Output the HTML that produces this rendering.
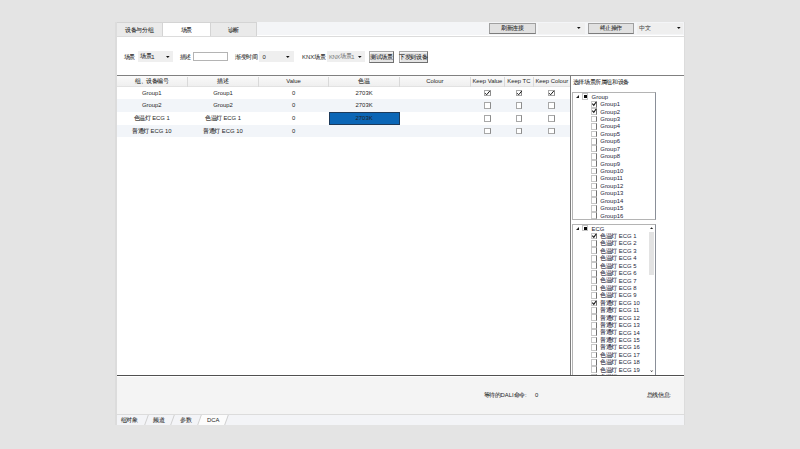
<!DOCTYPE html><html><head><meta charset="utf-8"><style>
*{margin:0;padding:0;box-sizing:border-box}
html,body{width:800px;height:449px;overflow:hidden;background:#e4e4e4;font-family:"Liberation Sans",sans-serif;color:#1f1f1f}
.a{position:absolute}
.t{position:absolute;font-size:5.9px;line-height:1;white-space:nowrap}
.c{transform:translateX(-50%)}
.z{position:relative;top:-0.2px;font-size:5.6px;letter-spacing:-0.4px;-webkit-text-stroke:0.06px currentColor}
.cb{position:absolute;width:6.8px;height:6.4px;border:0.7px solid #9a9a9a;background:#fff}
svg{position:absolute;overflow:visible}
</style></head><body>
<div class="a" style="left:116.00px;top:21.70px;width:568.50px;height:403.60px;background:#fff"></div>
<div class="a" style="left:116.00px;top:21.70px;width:568.50px;height:13.50px;background:#f4f5f7"></div>
<div class="a" style="left:116.00px;top:35.80px;width:568.50px;height:1.40px;background:#dcdcdc"></div>
<div class="a" style="left:116.00px;top:22.00px;width:46.40px;height:14.20px;background:#eaeaea;border-top:1px solid #d4d4d4"></div>
<div class="t c" style="left:139.20px;top:27.75px"><span class="z">设备与分组</span></div>
<div class="a" style="left:162.40px;top:22.00px;width:48.00px;height:14.20px;background:#fff;border-top:1px solid #d4d4d4"></div>
<div class="t c" style="left:186.40px;top:27.75px"><span class="z">场景</span></div>
<div class="a" style="left:210.40px;top:22.00px;width:46.10px;height:14.20px;background:#eaeaea;border-top:1px solid #d4d4d4"></div>
<div class="t c" style="left:233.45px;top:27.75px"><span class="z">诊断</span></div>
<div class="a" style="left:116.10px;top:22.00px;width:1.00px;height:14.00px;background:#d4d4d4"></div>
<div class="a" style="left:161.90px;top:22.00px;width:1.00px;height:14.00px;background:#d4d4d4"></div>
<div class="a" style="left:209.90px;top:22.00px;width:1.00px;height:14.00px;background:#d4d4d4"></div>
<div class="a" style="left:255.90px;top:22.00px;width:1.00px;height:14.00px;background:#d4d4d4"></div>
<div class="a" style="left:489.20px;top:23.30px;width:46.40px;height:10.30px;background:#e1e1e1;border:0.8px solid #a0a0a0;border-bottom-color:#7c7c7c"></div>
<div class="t c" style="left:512.40px;top:26.45px"><span class="z">刷新连接</span></div>
<div class="a" style="left:538.00px;top:23.00px;width:47.00px;height:11.20px;background:#efefef"></div>
<svg style="left:576.50px;top:27.25px" width="3.6" height="2.1"><path d="M0 0 L3.6 0 L1.8 2.1 Z" fill="#111"/></svg>
<div class="a" style="left:588.20px;top:23.30px;width:45.40px;height:10.40px;background:#e1e1e1;border:0.8px solid #a0a0a0;border-bottom-color:#7c7c7c"></div>
<div class="t c" style="left:610.90px;top:26.35px"><span class="z">终止操作</span></div>
<div class="a" style="left:637.10px;top:22.80px;width:46.30px;height:11.40px;background:#efefef"></div>
<div class="t" style="left:639.10px;top:26.55px;color:#505050"><span class="z">中文</span></div>
<svg style="left:676.50px;top:27.25px" width="3.6" height="2.1"><path d="M0 0 L3.6 0 L1.8 2.1 Z" fill="#111"/></svg>
<div class="t" style="left:123.60px;top:54.75px"><span class="z">场景</span></div>
<div class="a" style="left:137.75px;top:51.00px;width:35.35px;height:11.00px;background:#efefef"></div>
<div class="t" style="left:140.00px;top:54.55px"><span class="z">场景</span>1</div>
<svg style="left:165.90px;top:55.75px" width="3.6" height="2.1"><path d="M0 0 L3.6 0 L1.8 2.1 Z" fill="#111"/></svg>
<div class="t" style="left:179.60px;top:54.75px"><span class="z">描述</span></div>
<div class="a" style="left:193.10px;top:51.60px;width:34.80px;height:9.40px;background:#fff;border:0.7px solid #b4b4b4"></div>
<div class="t" style="left:235.00px;top:54.75px"><span class="z">渐变时间</span></div>
<div class="a" style="left:258.60px;top:51.00px;width:35.20px;height:11.00px;background:#efefef"></div>
<div class="t" style="left:262.50px;top:54.55px">0</div>
<svg style="left:286.40px;top:55.75px" width="3.6" height="2.1"><path d="M0 0 L3.6 0 L1.8 2.1 Z" fill="#111"/></svg>
<div class="t" style="left:302.10px;top:54.75px">KNX<span class="z">场景</span></div>
<div class="a" style="left:327.15px;top:50.60px;width:37.65px;height:11.80px;background:#efefef"></div>
<div class="t" style="left:328.90px;top:54.55px;color:#7a7a7a"><span style="letter-spacing:-0.35px">KNX</span><span class="z">场景</span>1</div>
<svg style="left:358.20px;top:55.75px" width="3.6" height="2.1"><path d="M0 0 L3.6 0 L1.8 2.1 Z" fill="#111"/></svg>
<div class="a" style="left:369.15px;top:50.90px;width:24.50px;height:11.70px;background:#e4e4e4;border:0.8px solid #a8a8a8;border-right-color:#707070;border-bottom-color:#707070;box-shadow:inset 0.7px 0.7px 0 #fafafa"></div>
<div class="t c" style="left:381.40px;top:54.80px"><span class="z">测试场景</span></div>
<div class="a" style="left:398.90px;top:50.90px;width:28.70px;height:11.70px;background:#e4e4e4;border:0.8px solid #a8a8a8;border-right-color:#707070;border-bottom-color:#707070;box-shadow:inset 0.7px 0.7px 0 #fafafa"></div>
<div class="t c" style="left:413.25px;top:54.80px"><span class="z">下发到设备</span></div>
<div class="a" style="left:117.00px;top:74.80px;width:566.80px;height:1.40px;background:#808080"></div>
<div class="a" style="left:117.00px;top:76.10px;width:453.00px;height:10.70px;background:linear-gradient(#fbfbfb,#f6f6f6 35%,#efefef);border-bottom:0.6px solid #e2e2e2"></div>
<div class="a" style="left:187.10px;top:76.50px;width:0.80px;height:10.10px;background:#d9d9d9"></div>
<div class="a" style="left:258.10px;top:76.50px;width:0.80px;height:10.10px;background:#d9d9d9"></div>
<div class="a" style="left:328.20px;top:76.50px;width:0.80px;height:10.10px;background:#d9d9d9"></div>
<div class="a" style="left:399.20px;top:76.50px;width:0.80px;height:10.10px;background:#d9d9d9"></div>
<div class="a" style="left:469.80px;top:76.50px;width:0.80px;height:10.10px;background:#d9d9d9"></div>
<div class="a" style="left:504.20px;top:76.50px;width:0.80px;height:10.10px;background:#d9d9d9"></div>
<div class="a" style="left:532.80px;top:76.50px;width:0.80px;height:10.10px;background:#d9d9d9"></div>
<div class="t c" style="left:151.75px;top:79.25px"><span class="z">组、设备编号</span></div>
<div class="t c" style="left:223.00px;top:79.25px"><span class="z">描述</span></div>
<div class="t c" style="left:293.55px;top:79.25px">Value</div>
<div class="t c" style="left:364.10px;top:79.25px"><span class="z">色温</span></div>
<div class="t c" style="left:434.90px;top:79.25px">Colour</div>
<div class="t c" style="left:487.40px;top:79.25px">Keep Value</div>
<div class="t c" style="left:518.90px;top:79.25px">Keep TC</div>
<div class="t c" style="left:551.75px;top:79.25px">Keep Colour</div>
<div class="t c" style="left:151.75px;top:90.85px">Group1</div>
<div class="t c" style="left:223.00px;top:90.85px">Group1</div>
<div class="t c" style="left:293.55px;top:90.85px">0</div>
<div class="t c" style="left:364.10px;top:90.85px">2703K</div>
<div class="a" style="left:484.00px;top:89.60px;width:6.80px;height:6.60px;background:#fff;border:0.7px solid #a8a8a8;border-right:0.8px solid #8c8c8c"></div>
<svg style="left:484.00px;top:89.60px" width="6.8" height="6.6" viewBox="0 0 6.8 6.6"><path d="M1.2 3.2 L2.6 4.8 L5.8 1.0" fill="none" stroke="#1a1a1a" stroke-width="1.0"/></svg>
<div class="a" style="left:515.50px;top:89.60px;width:6.80px;height:6.60px;background:#fff;border:0.7px solid #a8a8a8;border-right:0.8px solid #8c8c8c"></div>
<svg style="left:515.50px;top:89.60px" width="6.8" height="6.6" viewBox="0 0 6.8 6.6"><path d="M1.2 3.2 L2.6 4.8 L5.8 1.0" fill="none" stroke="#1a1a1a" stroke-width="1.0"/></svg>
<div class="a" style="left:548.35px;top:89.60px;width:6.80px;height:6.60px;background:#fff;border:0.7px solid #a8a8a8;border-right:0.8px solid #8c8c8c"></div>
<svg style="left:548.35px;top:89.60px" width="6.8" height="6.6" viewBox="0 0 6.8 6.6"><path d="M1.2 3.2 L2.6 4.8 L5.8 1.0" fill="none" stroke="#1a1a1a" stroke-width="1.0"/></svg>
<div class="a" style="left:117.00px;top:99.00px;width:453.00px;height:13.00px;background:#f2f5f9"></div>
<div class="t c" style="left:151.75px;top:103.45px">Group2</div>
<div class="t c" style="left:223.00px;top:103.45px">Group2</div>
<div class="t c" style="left:293.55px;top:103.45px">0</div>
<div class="t c" style="left:364.10px;top:103.45px">2703K</div>
<div class="a" style="left:484.00px;top:102.20px;width:6.80px;height:6.60px;background:#fff;border:0.7px solid #a8a8a8;border-right:0.8px solid #8c8c8c"></div>
<div class="a" style="left:515.50px;top:102.20px;width:6.80px;height:6.60px;background:#fff;border:0.7px solid #a8a8a8;border-right:0.8px solid #8c8c8c"></div>
<div class="a" style="left:548.35px;top:102.20px;width:6.80px;height:6.60px;background:#fff;border:0.7px solid #a8a8a8;border-right:0.8px solid #8c8c8c"></div>
<div class="a" style="left:328.70px;top:112.00px;width:71.30px;height:12.80px;background:#0b66b6;border:0.8px solid #1d3a5a"></div>
<div class="t c" style="left:151.75px;top:116.35px"><span class="z">色温灯</span> ECG 1</div>
<div class="t c" style="left:223.00px;top:116.35px"><span class="z">色温灯</span> ECG 1</div>
<div class="t c" style="left:293.55px;top:116.35px">0</div>
<div class="t c" style="left:364.10px;top:116.35px">2703K</div>
<div class="a" style="left:484.00px;top:115.10px;width:6.80px;height:6.60px;background:#fff;border:0.7px solid #a8a8a8;border-right:0.8px solid #8c8c8c"></div>
<div class="a" style="left:515.50px;top:115.10px;width:6.80px;height:6.60px;background:#fff;border:0.7px solid #a8a8a8;border-right:0.8px solid #8c8c8c"></div>
<div class="a" style="left:548.35px;top:115.10px;width:6.80px;height:6.60px;background:#fff;border:0.7px solid #a8a8a8;border-right:0.8px solid #8c8c8c"></div>
<div class="a" style="left:117.00px;top:124.80px;width:453.00px;height:12.10px;background:#f2f5f9"></div>
<div class="t c" style="left:151.75px;top:128.80px"><span class="z">普通灯</span> ECG 10</div>
<div class="t c" style="left:223.00px;top:128.80px"><span class="z">普通灯</span> ECG 10</div>
<div class="t c" style="left:293.55px;top:128.80px">0</div>
<div class="a" style="left:484.00px;top:127.55px;width:6.80px;height:6.60px;background:#fff;border:0.7px solid #a8a8a8;border-right:0.8px solid #8c8c8c"></div>
<div class="a" style="left:515.50px;top:127.55px;width:6.80px;height:6.60px;background:#fff;border:0.7px solid #a8a8a8;border-right:0.8px solid #8c8c8c"></div>
<div class="a" style="left:548.35px;top:127.55px;width:6.80px;height:6.60px;background:#fff;border:0.7px solid #a8a8a8;border-right:0.8px solid #8c8c8c"></div>
<div class="a" style="left:570.00px;top:75.00px;width:1.10px;height:300.50px;background:#7e7e7e"></div>
<div class="t" style="left:572.80px;top:79.75px"><span class="z">选择场景所属组和设备</span></div>
<div class="a" style="left:572.10px;top:92.00px;width:84.10px;height:128.00px;background:#fff;border:0.8px solid #b4b4b4;border-right-color:#8a8f98"></div>
<svg style="left:575.50px;top:94.90px" width="3.2" height="3.2"><path d="M3 0 L3 3 L0 3 Z" fill="#1a1a1a"/></svg>
<div class="a" style="left:581.90px;top:92.70px;width:6.30px;height:6.90px;background:#fff;border:0.8px solid #c4c4c4"></div>
<div class="a" style="left:583.70px;top:94.70px;width:3.10px;height:3.30px;background:#0a0a0a"></div>
<div class="t" style="left:591.60px;top:94.75px;color:#1a1a2e">Group</div>
<div class="a" style="left:590.60px;top:100.83px;width:6.80px;height:6.80px;background:#fff;border:0.7px solid #c8c8c8;border-right:0.8px solid #707070"></div>
<svg style="left:590.60px;top:100.83px" width="6.8" height="6.8" viewBox="0 0 6.8 6.8"><path d="M1.3 2.7 L2.8 4.4 L5.1 1.0" fill="none" stroke="#1a1a1a" stroke-width="1.15"/></svg>
<div class="t" style="left:600.30px;top:102.18px;color:#1c2438">Group1</div>
<div class="a" style="left:590.60px;top:108.26px;width:6.80px;height:6.80px;background:#fff;border:0.7px solid #c8c8c8;border-right:0.8px solid #707070"></div>
<svg style="left:590.60px;top:108.26px" width="6.8" height="6.8" viewBox="0 0 6.8 6.8"><path d="M1.3 2.7 L2.8 4.4 L5.1 1.0" fill="none" stroke="#1a1a1a" stroke-width="1.15"/></svg>
<div class="t" style="left:600.30px;top:109.61px;color:#1c2438">Group2</div>
<div class="a" style="left:590.60px;top:115.69px;width:6.80px;height:6.80px;background:#fff;border:0.7px solid #c8c8c8;border-right:0.8px solid #707070"></div>
<div class="t" style="left:600.30px;top:117.04px;color:#1c2438">Group3</div>
<div class="a" style="left:590.60px;top:123.12px;width:6.80px;height:6.80px;background:#fff;border:0.7px solid #c8c8c8;border-right:0.8px solid #707070"></div>
<div class="t" style="left:600.30px;top:124.47px;color:#1c2438">Group4</div>
<div class="a" style="left:590.60px;top:130.55px;width:6.80px;height:6.80px;background:#fff;border:0.7px solid #c8c8c8;border-right:0.8px solid #707070"></div>
<div class="t" style="left:600.30px;top:131.90px;color:#1c2438">Group5</div>
<div class="a" style="left:590.60px;top:137.98px;width:6.80px;height:6.80px;background:#fff;border:0.7px solid #c8c8c8;border-right:0.8px solid #707070"></div>
<div class="t" style="left:600.30px;top:139.33px;color:#1c2438">Group6</div>
<div class="a" style="left:590.60px;top:145.41px;width:6.80px;height:6.80px;background:#fff;border:0.7px solid #c8c8c8;border-right:0.8px solid #707070"></div>
<div class="t" style="left:600.30px;top:146.76px;color:#1c2438">Group7</div>
<div class="a" style="left:590.60px;top:152.84px;width:6.80px;height:6.80px;background:#fff;border:0.7px solid #c8c8c8;border-right:0.8px solid #707070"></div>
<div class="t" style="left:600.30px;top:154.19px;color:#1c2438">Group8</div>
<div class="a" style="left:590.60px;top:160.27px;width:6.80px;height:6.80px;background:#fff;border:0.7px solid #c8c8c8;border-right:0.8px solid #707070"></div>
<div class="t" style="left:600.30px;top:161.62px;color:#1c2438">Group9</div>
<div class="a" style="left:590.60px;top:167.70px;width:6.80px;height:6.80px;background:#fff;border:0.7px solid #c8c8c8;border-right:0.8px solid #707070"></div>
<div class="t" style="left:600.30px;top:169.05px;color:#1c2438">Group10</div>
<div class="a" style="left:590.60px;top:175.13px;width:6.80px;height:6.80px;background:#fff;border:0.7px solid #c8c8c8;border-right:0.8px solid #707070"></div>
<div class="t" style="left:600.30px;top:176.48px;color:#1c2438">Group11</div>
<div class="a" style="left:590.60px;top:182.56px;width:6.80px;height:6.80px;background:#fff;border:0.7px solid #c8c8c8;border-right:0.8px solid #707070"></div>
<div class="t" style="left:600.30px;top:183.91px;color:#1c2438">Group12</div>
<div class="a" style="left:590.60px;top:189.99px;width:6.80px;height:6.80px;background:#fff;border:0.7px solid #c8c8c8;border-right:0.8px solid #707070"></div>
<div class="t" style="left:600.30px;top:191.34px;color:#1c2438">Group13</div>
<div class="a" style="left:590.60px;top:197.42px;width:6.80px;height:6.80px;background:#fff;border:0.7px solid #c8c8c8;border-right:0.8px solid #707070"></div>
<div class="t" style="left:600.30px;top:198.77px;color:#1c2438">Group14</div>
<div class="a" style="left:590.60px;top:204.85px;width:6.80px;height:6.80px;background:#fff;border:0.7px solid #c8c8c8;border-right:0.8px solid #707070"></div>
<div class="t" style="left:600.30px;top:206.20px;color:#1c2438">Group15</div>
<div class="a" style="left:590.60px;top:212.28px;width:6.80px;height:6.80px;background:#fff;border:0.7px solid #c8c8c8;border-right:0.8px solid #707070"></div>
<div class="t" style="left:600.30px;top:213.63px;color:#1c2438">Group16</div>
<div class="a" style="left:572.10px;top:224.40px;width:84.10px;height:151.10px;background:#fff;border:0.8px solid #b4b4b4;border-right-color:#8a8f98"></div>
<div class="a" style="left:0;top:0;width:800px;height:374.9px;overflow:hidden">
<div class="a" style="left:572.10px;top:224.40px;width:84.10px;height:155.60px;background:#fff;border:0.8px solid #b4b4b4;border-right-color:#8a8f98"></div>
<svg style="left:575.50px;top:226.70px" width="3.2" height="3.2"><path d="M3 0 L3 3 L0 3 Z" fill="#1a1a1a"/></svg>
<div class="a" style="left:581.90px;top:224.50px;width:6.30px;height:6.90px;background:#fff;border:0.8px solid #c4c4c4"></div>
<div class="a" style="left:583.70px;top:226.50px;width:3.10px;height:3.30px;background:#0a0a0a"></div>
<div class="t" style="left:591.60px;top:226.55px;color:#1a1a2e">ECG</div>
<div class="a" style="left:590.60px;top:232.63px;width:6.80px;height:6.80px;background:#fff;border:0.7px solid #c8c8c8;border-right:0.8px solid #707070"></div>
<svg style="left:590.60px;top:232.63px" width="6.8" height="6.8" viewBox="0 0 6.8 6.8"><path d="M1.3 2.7 L2.8 4.4 L5.1 1.0" fill="none" stroke="#1a1a1a" stroke-width="1.15"/></svg>
<div class="t" style="left:600.30px;top:233.98px;color:#1c2438"><span class="z">色温灯</span> ECG 1</div>
<div class="a" style="left:590.60px;top:240.06px;width:6.80px;height:6.80px;background:#fff;border:0.7px solid #c8c8c8;border-right:0.8px solid #707070"></div>
<div class="t" style="left:600.30px;top:241.41px;color:#1c2438"><span class="z">色温灯</span> ECG 2</div>
<div class="a" style="left:590.60px;top:247.49px;width:6.80px;height:6.80px;background:#fff;border:0.7px solid #c8c8c8;border-right:0.8px solid #707070"></div>
<div class="t" style="left:600.30px;top:248.84px;color:#1c2438"><span class="z">色温灯</span> ECG 3</div>
<div class="a" style="left:590.60px;top:254.92px;width:6.80px;height:6.80px;background:#fff;border:0.7px solid #c8c8c8;border-right:0.8px solid #707070"></div>
<div class="t" style="left:600.30px;top:256.27px;color:#1c2438"><span class="z">色温灯</span> ECG 4</div>
<div class="a" style="left:590.60px;top:262.35px;width:6.80px;height:6.80px;background:#fff;border:0.7px solid #c8c8c8;border-right:0.8px solid #707070"></div>
<div class="t" style="left:600.30px;top:263.70px;color:#1c2438"><span class="z">色温灯</span> ECG 5</div>
<div class="a" style="left:590.60px;top:269.78px;width:6.80px;height:6.80px;background:#fff;border:0.7px solid #c8c8c8;border-right:0.8px solid #707070"></div>
<div class="t" style="left:600.30px;top:271.13px;color:#1c2438"><span class="z">色温灯</span> ECG 6</div>
<div class="a" style="left:590.60px;top:277.21px;width:6.80px;height:6.80px;background:#fff;border:0.7px solid #c8c8c8;border-right:0.8px solid #707070"></div>
<div class="t" style="left:600.30px;top:278.56px;color:#1c2438"><span class="z">色温灯</span> ECG 7</div>
<div class="a" style="left:590.60px;top:284.64px;width:6.80px;height:6.80px;background:#fff;border:0.7px solid #c8c8c8;border-right:0.8px solid #707070"></div>
<div class="t" style="left:600.30px;top:285.99px;color:#1c2438"><span class="z">色温灯</span> ECG 8</div>
<div class="a" style="left:590.60px;top:292.07px;width:6.80px;height:6.80px;background:#fff;border:0.7px solid #c8c8c8;border-right:0.8px solid #707070"></div>
<div class="t" style="left:600.30px;top:293.42px;color:#1c2438"><span class="z">色温灯</span> ECG 9</div>
<div class="a" style="left:590.60px;top:299.50px;width:6.80px;height:6.80px;background:#fff;border:0.7px solid #c8c8c8;border-right:0.8px solid #707070"></div>
<svg style="left:590.60px;top:299.50px" width="6.8" height="6.8" viewBox="0 0 6.8 6.8"><path d="M1.3 2.7 L2.8 4.4 L5.1 1.0" fill="none" stroke="#1a1a1a" stroke-width="1.15"/></svg>
<div class="t" style="left:600.30px;top:300.85px;color:#1c2438"><span class="z">普通灯</span> ECG 10</div>
<div class="a" style="left:590.60px;top:306.93px;width:6.80px;height:6.80px;background:#fff;border:0.7px solid #c8c8c8;border-right:0.8px solid #707070"></div>
<div class="t" style="left:600.30px;top:308.28px;color:#1c2438"><span class="z">普通灯</span> ECG 11</div>
<div class="a" style="left:590.60px;top:314.36px;width:6.80px;height:6.80px;background:#fff;border:0.7px solid #c8c8c8;border-right:0.8px solid #707070"></div>
<div class="t" style="left:600.30px;top:315.71px;color:#1c2438"><span class="z">普通灯</span> ECG 12</div>
<div class="a" style="left:590.60px;top:321.79px;width:6.80px;height:6.80px;background:#fff;border:0.7px solid #c8c8c8;border-right:0.8px solid #707070"></div>
<div class="t" style="left:600.30px;top:323.14px;color:#1c2438"><span class="z">普通灯</span> ECG 13</div>
<div class="a" style="left:590.60px;top:329.22px;width:6.80px;height:6.80px;background:#fff;border:0.7px solid #c8c8c8;border-right:0.8px solid #707070"></div>
<div class="t" style="left:600.30px;top:330.57px;color:#1c2438"><span class="z">普通灯</span> ECG 14</div>
<div class="a" style="left:590.60px;top:336.65px;width:6.80px;height:6.80px;background:#fff;border:0.7px solid #c8c8c8;border-right:0.8px solid #707070"></div>
<div class="t" style="left:600.30px;top:338.00px;color:#1c2438"><span class="z">普通灯</span> ECG 15</div>
<div class="a" style="left:590.60px;top:344.08px;width:6.80px;height:6.80px;background:#fff;border:0.7px solid #c8c8c8;border-right:0.8px solid #707070"></div>
<div class="t" style="left:600.30px;top:345.43px;color:#1c2438"><span class="z">普通灯</span> ECG 16</div>
<div class="a" style="left:590.60px;top:351.51px;width:6.80px;height:6.80px;background:#fff;border:0.7px solid #c8c8c8;border-right:0.8px solid #707070"></div>
<div class="t" style="left:600.30px;top:352.86px;color:#1c2438"><span class="z">色温灯</span> ECG 17</div>
<div class="a" style="left:590.60px;top:358.94px;width:6.80px;height:6.80px;background:#fff;border:0.7px solid #c8c8c8;border-right:0.8px solid #707070"></div>
<div class="t" style="left:600.30px;top:360.29px;color:#1c2438"><span class="z">色温灯</span> ECG 18</div>
<div class="a" style="left:590.60px;top:366.37px;width:6.80px;height:6.80px;background:#fff;border:0.7px solid #c8c8c8;border-right:0.8px solid #707070"></div>
<div class="t" style="left:600.30px;top:367.72px;color:#1c2438"><span class="z">色温灯</span> ECG 19</div>
<div class="a" style="left:590.60px;top:373.80px;width:6.80px;height:6.80px;background:#fff;border:0.7px solid #c8c8c8;border-right:0.8px solid #707070"></div>
<div class="t" style="left:600.30px;top:375.15px;color:#1c2438"><span class="z">色温灯</span> ECG 20</div>
<div class="a" style="left:649.10px;top:232.00px;width:5.20px;height:42.80px;background:#e3e3e3"></div>
<svg style="left:650.2px;top:226.9px" width="3.2" height="2"><path d="M0 1.9 L1.6 0.2 L3.2 1.9 Z" fill="#222"/></svg>
</div>
<svg style="left:650.3px;top:370.1px" width="3.4" height="2.2"><path d="M0 0 L1.7 2.1 L3.4 0 L1.7 0.9 Z" fill="#1a1a1a"/></svg>
<div class="a" style="left:115.20px;top:21.70px;width:1.80px;height:403.60px;background:#dcdcdc"></div>
<div class="a" style="left:683.80px;top:21.70px;width:1.10px;height:403.60px;background:#dcdcdc"></div>
<div class="a" style="left:117.00px;top:375.10px;width:566.80px;height:1.40px;background:#505050"></div>
<div class="a" style="left:117.00px;top:376.60px;width:566.80px;height:37.20px;background:#f4f4f4"></div>
<div class="t" style="left:483.80px;top:392.85px"><span class="z">等待的</span>DALI<span class="z">命令</span>:</div>
<div class="t" style="left:535.00px;top:392.85px">0</div>
<div class="t" style="left:646.80px;top:392.85px"><span class="z">总线信息</span>:</div>
<div class="a" style="left:117.00px;top:413.80px;width:566.80px;height:11.50px;background:#f3f4f7;border-top:1.2px solid #dcdcdc"></div>
<div class="a" style="left:199.30px;top:415.00px;width:27.30px;height:10.30px;background:#fcfcfc;transform:skewX(-20deg)"></div>
<div class="t" style="left:120.90px;top:418.35px"><span class="z">组对象</span></div>
<div class="t" style="left:153.40px;top:418.35px"><span class="z">频道</span></div>
<div class="t" style="left:180.00px;top:418.35px"><span class="z">参数</span></div>
<div class="t" style="left:207.00px;top:418.35px">DCA</div>
<div class="a" style="left:145.90px;top:415.00px;width:0.80px;height:10.00px;background:#d0d0d0;transform:skewX(-20deg)"></div>
<div class="a" style="left:172.00px;top:415.00px;width:0.80px;height:10.00px;background:#d0d0d0;transform:skewX(-20deg)"></div>
<div class="a" style="left:199.00px;top:415.00px;width:0.80px;height:10.00px;background:#d0d0d0;transform:skewX(-20deg)"></div>
<div class="a" style="left:226.40px;top:415.00px;width:0.80px;height:10.00px;background:#d0d0d0;transform:skewX(-20deg)"></div>
</body></html>
